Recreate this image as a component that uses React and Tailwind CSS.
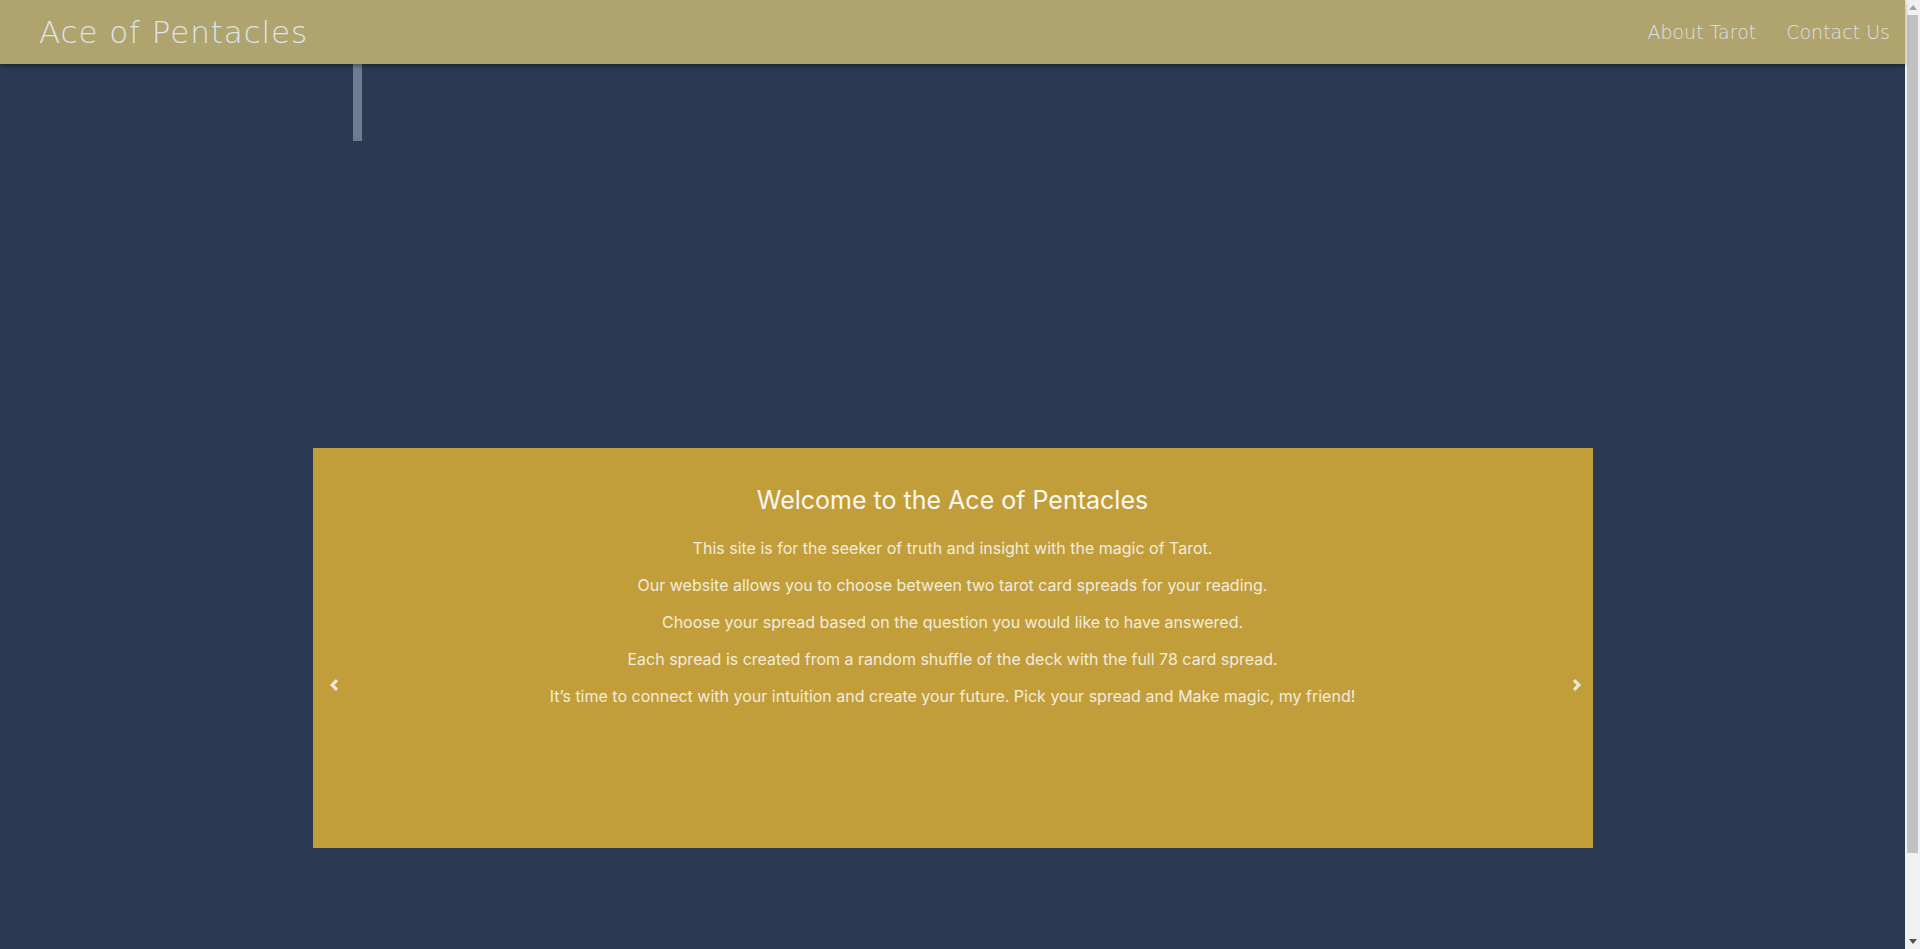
const lines = [
  'This site is for the seeker of truth and insight with the magic of Tarot.',
  'Our website allows you to choose between two tarot card spreads for your reading.',
  'Choose your spread based on the question you would like to have answered.',
  'Each spread is created from a random shuffle of the deck with the full 78 card spread.',
  'It\u2019s time to connect with your intuition and create your future. Pick your spread and Make magic, my friend!',
];

function Chevron({ dir }) {
  return (
    <svg width="12" height="12" viewBox="0 0 8 8" className="fill-[#ebe7dd]">
      {dir === 'left' ? (
        <path d="M5.25 0l-4 4 4 4 1.5-1.5L4.25 4l2.5-2.5L5.25 0z" />
      ) : (
        <path d="M2.75 0l-1.5 1.5L3.75 4l-2.5 2.5L2.75 8l4-4-4-4z" />
      )}
    </svg>
  );
}

// browser scrollbar, as seen in the screenshot
function Scrollbar() {
  return (
    <div className="w-[15px] h-[949px] bg-[#f1f1f1] flex flex-col items-center shrink-0">
      <div className="h-[15px] flex items-center justify-center">
        <svg width="8" height="5" viewBox="0 0 8 5"><path d="M0 5 4 0 8 5z" fill="#a3a3a3" /></svg>
      </div>
      <div className="w-[11px] h-[838px] bg-[#c1c1c1]" />
      <div className="flex-1" />
      <div className="h-[15px] flex items-center justify-center">
        <svg width="8" height="5" viewBox="0 0 8 5"><path d="M0 0 4 5 8 0z" fill="#505050" /></svg>
      </div>
    </div>
  );
}

export default function App() {
  return (
    <div className="h-[949px] overflow-hidden flex bg-[#293a52] font-['Inter',sans-serif]">
      <div className="flex-1 min-w-0">
        <header className="h-16 bg-[#b0a46e] pl-[39px] pr-[15px] flex items-center justify-between shadow-[0_2px_4px_rgba(0,0,0,0.35)] relative z-10">
          <a href="#" className="font-['DejaVu_Sans',sans-serif] font-extralight text-[31px] tracking-[0.9px] text-[#dfe3eb]">
            Ace of Pentacles
          </a>
          <nav className="flex items-center gap-[30px] font-['DejaVu_Sans',sans-serif] font-extralight text-[19px] text-[#dfe0e3]">
            <a href="#">About Tarot</a>
            <a href="#">Contact Us</a>
          </nav>
        </header>

        <main>
          <div className="ml-[353px] w-[9px] h-[77px] bg-[#6f7c8f]" />

          <section className="relative mx-auto mt-[307px] w-[1280px] h-[400px] bg-[#c29e3a] pt-[38px] text-center">
            <h3 className="text-[25px] leading-[28px] text-[#fbf8f1] mb-[24px]">Welcome to the Ace of Pentacles</h3>
            {lines.map((l) => (
              <p key={l} className="text-[16px] leading-[21px] mb-4 text-[#f2ecdd]">{l}</p>
            ))}
            <button className="absolute left-[15px] top-[231px]"><Chevron dir="left" /></button>
            <button className="absolute right-[10px] top-[231px]"><Chevron dir="right" /></button>
          </section>
        </main>
      </div>
      <Scrollbar />
    </div>
  );
}
